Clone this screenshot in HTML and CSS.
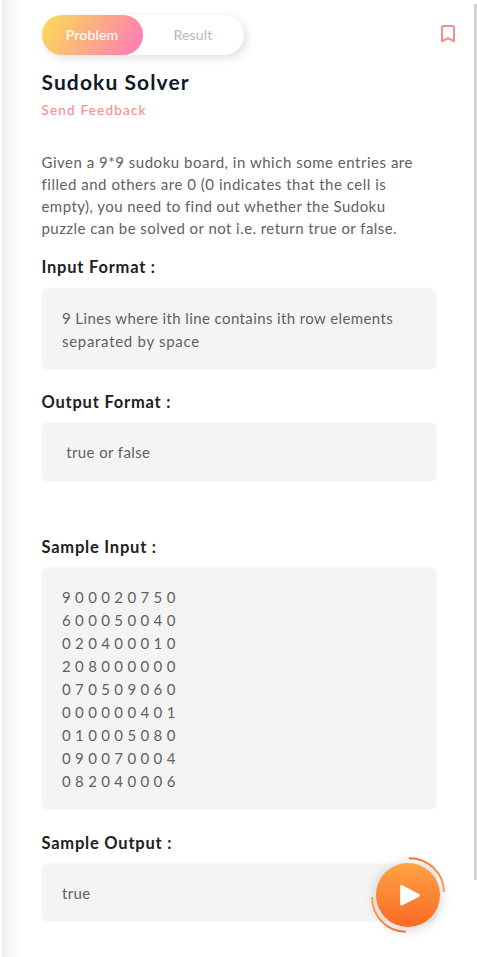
FILE: index.html
```html
<!DOCTYPE html>
<html lang="en">
<head>
<meta charset="utf-8">
<title>Sudoku Solver</title>
<link rel="stylesheet" href="styles.css">
</head>
<body>
<main class="panel">
  <header class="top">
    <nav class="tabs"><button class="tab active">Problem</button><button class="tab">Result</button></nav>
    <svg class="bookmark" width="16" height="20" viewBox="0 0 16 20" fill="none" stroke="#ff8c8c" stroke-width="2" stroke-linejoin="round"><path d="M2 17.300V3Q2 2 3 2h10q1 0 1 1v14.300l-6-3.200z"/></svg>
  </header>
  <h1>Sudoku Solver</h1>
  <a class="feedback">Send Feedback</a>
  <p class="description">Given a 9*9 sudoku board, in which some entries are<br>filled and others are 0 (0 indicates that the cell is<br><span class="snug">empty), you need to find out whether the Sudoku<br>puzzle can be solved or not i.e. return true or false.</span></p>
  <h2>Input Format :</h2>
  <pre class="box input-format">9 Lines where ith line contains ith row elements
<span class="loose">separated by space</span></pre>
  <h2>Output Format :</h2>
  <pre class="box output-format"> true or false</pre>
  <h2>Sample Input :</h2>
  <pre class="box sample-input">9 0 0 0 2 0 7 5 0
6 0 0 0 5 0 0 4 0
0 2 0 4 0 0 0 1 0
2 0 8 0 0 0 0 0 0
0 7 0 5 0 9 0 6 0
0 0 0 0 0 0 4 0 1
0 1 0 0 0 5 0 8 0
0 9 0 0 7 0 0 0 4
0 8 2 0 4 0 0 0 6</pre>
  <h2>Sample Output :</h2>
  <pre class="box sample-output">true</pre>
</main>
<div class="scrollbar"></div>
<button class="run" aria-label="Run">
  <svg width="76" height="78" viewBox="0 0 76 78" fill="none">
    <defs>
      <linearGradient id="disc" x1="0" y1="0" x2="0" y2="1"><stop stop-color="#ffa346"/><stop offset="1" stop-color="#fb6923"/></linearGradient>
      <linearGradient id="arcTop" x1="0" y1="0" x2="1" y2="1"><stop stop-color="#f96b28"/><stop offset="1" stop-color="#ffa045"/></linearGradient>
      <linearGradient id="arcBottom" x1="0" y1="0" x2="1" y2="1"><stop stop-color="#ffa045"/><stop offset="1" stop-color="#f96b28"/></linearGradient>
    </defs>
    <circle class="disc" cx="38" cy="39" r="32" fill="url(#disc)"/>
    <path d="M39 2.300C58 2.300 74 17 74 36" stroke="url(#arcTop)" stroke-width="1.900"/>
    <path d="M2 41C2 60 17 75.700 35.700 75.700" stroke="url(#arcBottom)" stroke-width="1.900"/>
    <path d="M31.700 30.500v17.500l16.700-8.700z" fill="#fff" stroke="#fff" stroke-width="3" stroke-linejoin="round"/>
  </svg>
</button>
</body>
</html>
```
FILE: styles.css
```css
* { box-sizing: border-box; }
body {
  margin: 0;
  height: 957px;
  overflow: hidden;
  background: #fff;
  font-family: Lato, "Noto Sans", sans-serif;
}
.panel {
  height: 957px;
  margin-left: 2px;
  padding: 15px 41.5px 0 39.5px;
  background: linear-gradient(90deg, #ededed 0, #f4f4f4 5px, #fafafa 11px, #fdfdfd 17px, #fff 24px);
}
.top {
  display: flex;
  justify-content: space-between;
  margin-right: -20.5px;
  height: 40px;
}
.tabs {
  display: flex;
  width: 202px;
  height: 40px;
  margin-left: .5px;
  border-radius: 20px;
  background: #fff;
  box-shadow: 3px 3px 10px rgba(0, 0, 0, .12);
}
.tab {
  flex: 1;
  border: 0;
  padding: 0 1px 2px 0;
  border-radius: 20px;
  background: transparent;
  color: #bdbdbd;
  font: 500 14px Lato, sans-serif;
  letter-spacing: .15px;
}
.tab.active {
  background: linear-gradient(120deg, #fad957 5%, #ff7fb2 92%);
  color: #fff;
}
.bookmark { margin-top: 9px; }
h1 {
  margin: 13px 0 0;
  font-size: 21px;
  line-height: 28px;
  font-weight: 700;
  letter-spacing: 1.1px;
  color: #111827;
}
.feedback {
  display: block;
  margin-top: 5px;
  font-size: 13.5px;
  line-height: 18px;
  letter-spacing: 1.2px;
  font-weight: 500;
  color: #ff8c8c;
}
.description {
  margin: 32px 0 0;
  font-size: 15px;
  line-height: 22px;
  letter-spacing: .52px;
  color: #616161;
  white-space: nowrap;
}
.snug { letter-spacing: .44px; }
h2 {
  margin: 0;
  font-size: 16.5px;
  line-height: 22px;
  font-weight: 700;
  letter-spacing: .77px;
  color: #212121;
}
.description + h2 { margin-top: 17px; }
.box {
  margin: 11px 0 22px;
  width: 394px;
  padding: 18px 20px 16px 20.5px;
  border-radius: 5px;
  background: #f4f4f4;
  box-shadow: 0 0 3px rgba(0, 0, 0, .06);
  color: #616161;
  font: 15px/23px Lato, sans-serif;
  letter-spacing: .39px;
}
.loose { letter-spacing: .7px; }
.input-format { height: 80px; }
.output-format { height: 58px; margin: 10px 0 55px; }
.sample-input { height: 241px; margin: 10px 0 23px; letter-spacing: .27px; }
.sample-output { height: 57px; margin: 10px 0 0; }
.scrollbar {
  position: absolute;
  top: 4px;
  right: 0;
  width: 3px;
  height: 876px;
  background: #d3d3d3;
}
.run {
  position: absolute;
  left: 370px;
  top: 856px;
  width: 76px;
  height: 78px;
  padding: 0;
  border: 0;
  background: none;
}
.run svg { display: block; overflow: visible; }
.disc { filter: drop-shadow(0 2px 6px rgba(0, 0, 0, .2)); }
```
